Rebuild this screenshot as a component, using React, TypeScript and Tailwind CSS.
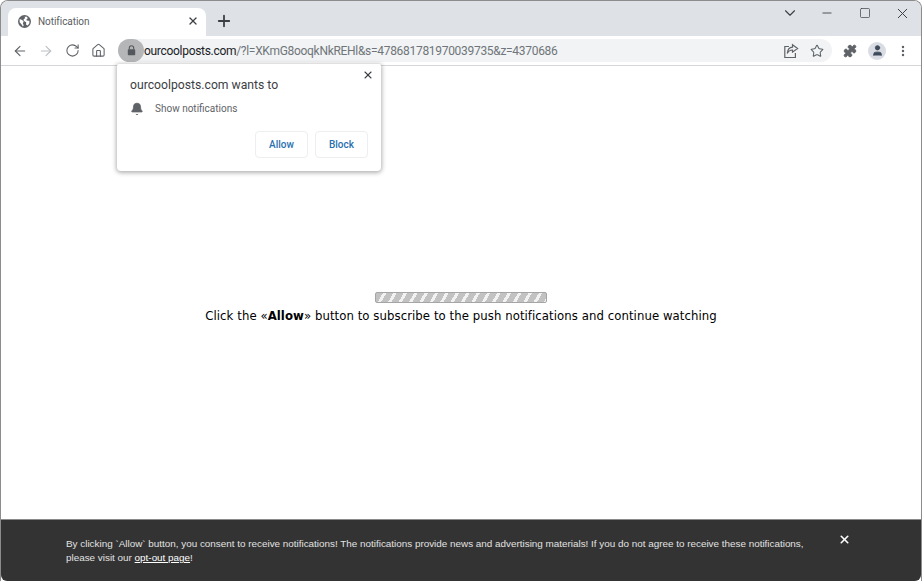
import React from 'react';
import { X, Plus, ArrowLeft, ArrowRight, RotateCw, Home, Star, Puzzle, User, MoreVertical, ChevronDown, Minus, Square, Bell } from 'lucide-react';

const Sans = '[font-family:Roboto,"Open_Sans",sans-serif]';

const ShareIcon = () => (
  <svg width="16" height="16" viewBox="0 0 16 16" fill="none" stroke="#5f6368" strokeWidth="1.2">
    <path d="M6 3.5H1.8v11h10.6V10" />
    <path d="M9.5 1.8 14.6 5.6 9.5 9.2V7C7 7 5.4 8 4.3 10.4 4.6 6.8 6.6 4.4 9.5 4.2Z" />
  </svg>
);

const GlobeIcon = () => (
  <svg width="13" height="13" viewBox="0 0 16 16">
    <circle cx="8" cy="8" r="8" fill="#5f6368" />
    <path d="M2 5l3 1 2 2-1 2 1 3-1 1-2-3-2-2zM8 2l3 0 1 2-2 2 2 1 2 0 0 3-2 3-2-1 0-3-3-2 0-2 2-1z" fill="#fff" />
  </svg>
);

const LockIcon = () => (
  <svg width="9" height="11" viewBox="0 0 9 11">
    <path d="M2.3 4.5V3a2.2 2.2 0 0 1 4.4 0v1.5" fill="none" stroke="#55585c" strokeWidth="1.1" />
    <rect x="0.8" y="4.2" width="7.4" height="6" rx="0.8" fill="#55585c" />
  </svg>
);

const TitleBar = () => (
  <div className="flex h-[35px] shrink-0 items-end bg-[#dee1e6] pl-[7px]">
    <div className="flex h-[28px] w-[198px] items-center rounded-t-lg bg-white pb-[2px] pl-[10px] pr-[7px]">
      <GlobeIcon />
      <span className={`ml-[7px] flex-1 text-[10px] tracking-[-0.05px] text-[#5a5d61] ${Sans}`}>Notification</span>
      <X size={12} strokeWidth={2.6} className="text-[#3c4043]" />
    </div>
    <div className="mb-[6px] ml-[12px] flex w-[12px] items-center justify-center">
      <Plus size={18} strokeWidth={2.4} className="shrink-0 text-[#3c4043]" />
    </div>
    <div className="mb-[14px] ml-auto flex items-center pr-[10px] text-[#3c4043]">
      <ChevronDown size={18} strokeWidth={1.5} />
      <Minus size={14} strokeWidth={1.5} className="ml-[21px]" />
      <Square size={12} strokeWidth={1.4} className="ml-[25px]" />
      <X size={17} strokeWidth={1.4} className="ml-[23px]" />
    </div>
  </div>
);

const Toolbar = () => (
  <div className="flex h-[30px] shrink-0 items-center border-b border-[#d4d6d9] bg-white pl-[11px]">
    <ArrowLeft size={16} strokeWidth={1.7} className="text-[#5f6368]" />
    <ArrowRight size={16} strokeWidth={1.7} className="ml-[10px] text-[#bcc0c4]" />
    <RotateCw size={15} strokeWidth={1.7} className="ml-[11px] text-[#5f6368]" />
    <Home size={15} strokeWidth={1.7} className="ml-[11px] text-[#5f6368]" />
    <div className="ml-[12px] flex h-[23px] w-[714px] items-center rounded-full bg-[#f1f3f4] pr-[8px]">
      <div className="flex h-[23px] w-[26px] items-center justify-center rounded-full bg-[#b4b6b8]">
        <LockIcon />
      </div>
      <span className={`flex-1 text-[12px] tracking-[-0.3px] text-[#70757a] ${Sans}`}>
        <span className="text-[#202124]">ourcoolposts.com</span>/?l=XKmG8ooqkNkREHl&amp;s=478681781970039735&amp;z=4370686
      </span>
      <ShareIcon />
      <Star size={14} strokeWidth={1.8} className="ml-[11px] text-[#5f6368]" />
    </div>
    <Puzzle size={14} fill="#5f6368" strokeWidth={1.6} className="ml-[11px] text-[#5f6368]" />
    <div className="ml-[11px] flex h-[18px] w-[18px] items-center justify-center rounded-full bg-[#d9dce3]">
      <User size={13} fill="#3f4a5a" strokeWidth={1.6} className="text-[#3f4a5a]" />
    </div>
    <MoreVertical size={14} strokeWidth={2.2} className="ml-[10px] text-[#5f6368]" />
  </div>
);

const PermissionPopup = () => (
  <div className={`absolute left-[116px] top-[63px] h-[107px] w-[264px] rounded-b-[4px] rounded-t-[2px] bg-white shadow-[0_1px_4px_1px_rgba(0,0,0,0.3)] ${Sans}`}>
    <X size={12} strokeWidth={2.2} className="absolute right-[7px] top-[5px] text-[#3c4043]" />
    <p className="ml-[13px] mt-[13px] text-[12.2px] leading-[17px] text-[#3c4043]">ourcoolposts.com wants to</p>
    <div className="ml-[13px] mt-[7px] flex items-center">
      <Bell size={14} fill="#5f6368" strokeWidth={1.5} className="text-[#5f6368]" />
      <span className="ml-[11px] text-[10px] text-[#5f6368]">Show notifications</span>
    </div>
    <div className="mr-[13px] mt-[15px] flex justify-end gap-[7px]">
      <button className="h-[27px] w-[53px] rounded-[4px] border border-[#eceef0] text-[10px] font-medium text-[#2a6fb0]">Allow</button>
      <button className="h-[27px] w-[53px] rounded-[4px] border border-[#eceef0] text-[10px] font-medium text-[#2a6fb0]">Block</button>
    </div>
  </div>
);

const PageBody = () => (
  <div className="flex flex-1 flex-col items-center bg-white pt-[226px]">
    <div className="h-[11px] w-[172px] rounded-[2px] border border-[#a5a5a5] bg-[repeating-linear-gradient(120deg,#c2c2c2_0px,#c2c2c2_6px,#f2f2f2_6px,#f2f2f2_9px)]" />
    <p className="mt-[3px] text-[13px] leading-[20px] tracking-[0.07px] text-black [font-family:'DejaVu_Sans_Condensed','DejaVu_Sans',sans-serif] [font-stretch:condensed]">
      Click the «<b>Allow</b>» button to subscribe to the push notifications and continue watching
    </p>
  </div>
);

const ConsentBar = () => (
  <div className="relative h-[62px] shrink-0 rounded-b-md border-t border-[#8a8a8a] bg-[#333333] pl-[65px] pt-[17px] text-[9.9px] leading-[14px] text-[#e2e2e2] [font-family:'Liberation_Sans',sans-serif]">
    <p className="w-[745px]">
      By clicking `Allow` button, you consent to receive notifications! The notifications provide news and advertising materials! If you do not agree to receive these notifications, please visit our <a className="text-white underline">opt-out page</a>!
    </p>
    <X size={13} strokeWidth={3} className="absolute left-[837px] top-[13px] text-white" />
  </div>
);

export default function App() {
  return (
    <div className="relative flex h-[581px] w-[922px] flex-col overflow-hidden rounded-t-lg border-x border-t border-[#8c8c8c] bg-white">
      <TitleBar />
      <Toolbar />
      <PageBody />
      <ConsentBar />
      <PermissionPopup />
    </div>
  );
}
